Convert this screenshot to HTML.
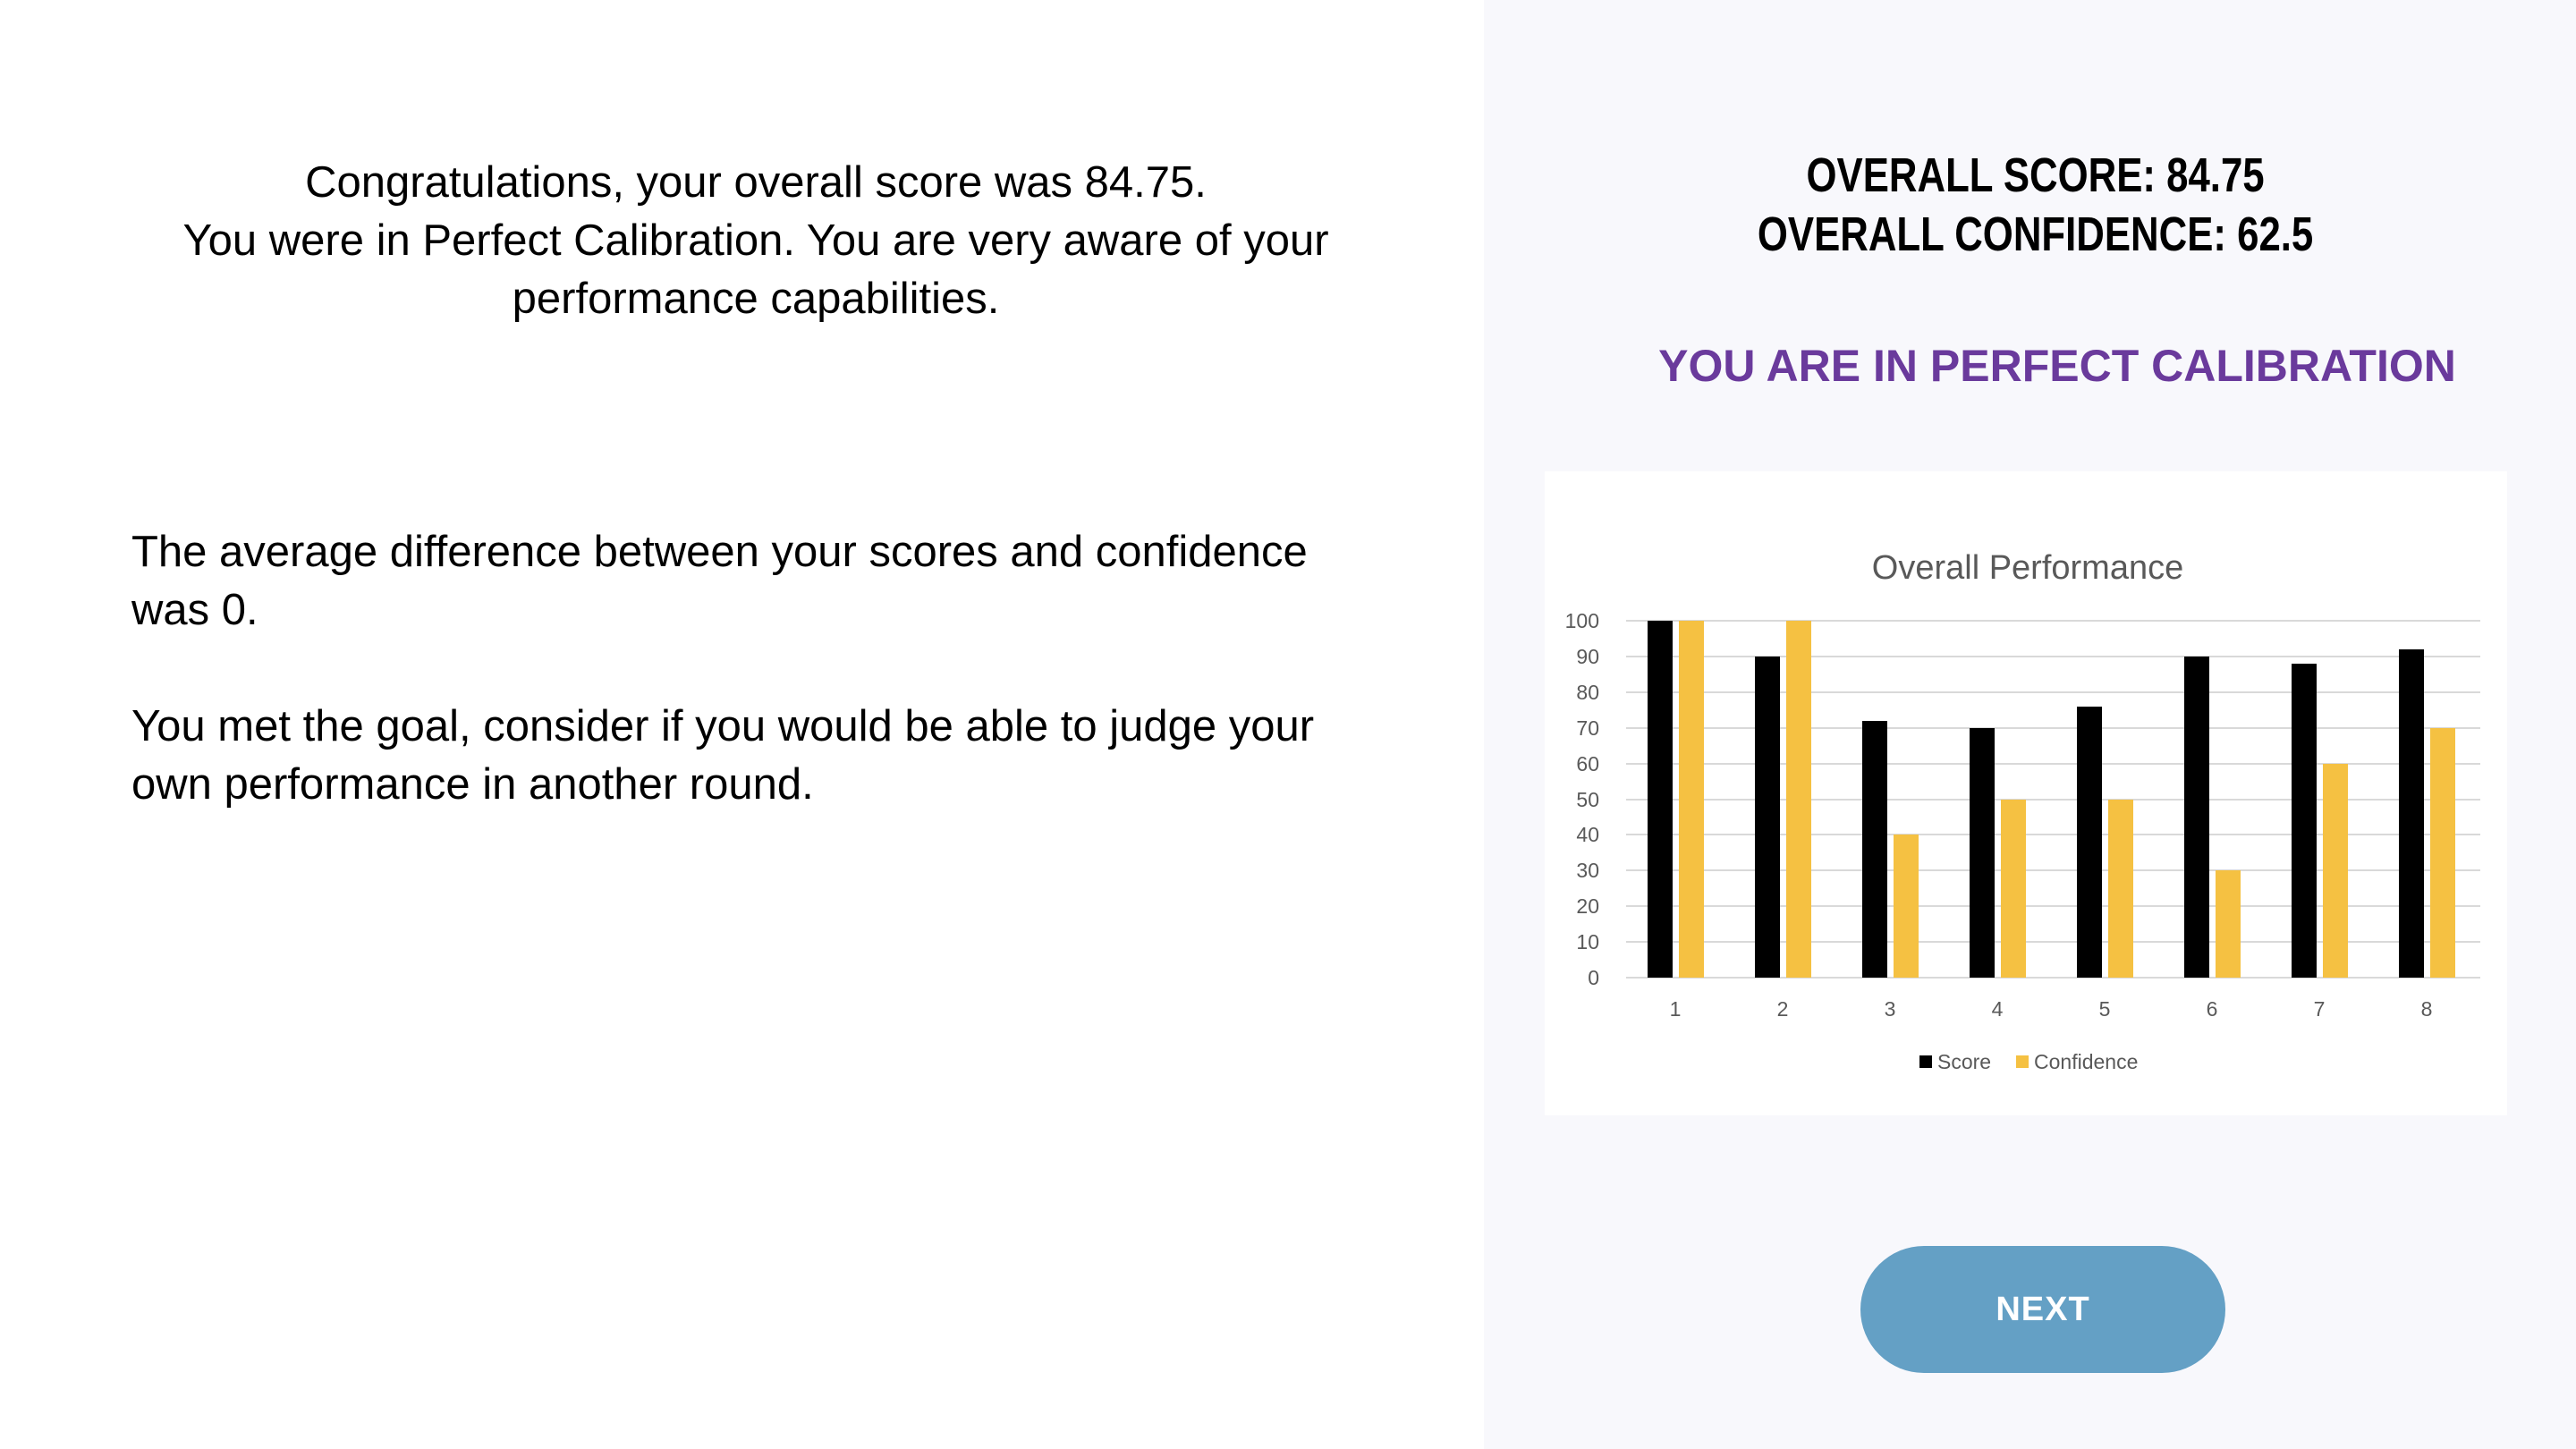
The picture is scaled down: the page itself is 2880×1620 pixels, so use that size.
<!DOCTYPE html>
<html><head><meta charset="utf-8">
<style>
html,body{margin:0;padding:0}
body{width:2880px;height:1620px;position:relative;overflow:hidden;background:#fff;font-family:"Liberation Sans",sans-serif}
.right{position:absolute;left:1659px;top:0;width:1221px;height:1620px;background:#f8f8fc}
.l{position:absolute;color:#000;font-size:49px;line-height:65px}
.c{left:0;width:1690px;text-align:center;top:172px}
.p{left:147px;width:1500px}
.h{position:absolute;left:1659px;width:1234px;text-align:center;top:163px}
.h span{display:inline-block;transform:scaleX(.81);font-weight:bold;color:#000;font-size:54px;line-height:66px;white-space:nowrap}
.cal{position:absolute;left:1659px;width:1282px;text-align:center;top:380px;font-weight:bold;color:#6a3a9c;font-size:50px}
.btn{position:absolute;left:2080px;top:1393px;width:408px;height:142px;border-radius:71px;background:#64a0c5;color:#fff;font-weight:bold;font-size:38px;text-align:center;line-height:142px;letter-spacing:1px}
</style></head><body>
<div class="right"></div>
<div class="l c">Congratulations, your overall score was 84.75.<br>You were in Perfect Calibration. You are very aware of your<br>performance capabilities.</div>
<div class="l p" style="top:585px">The average difference between your scores and confidence<br>was 0.</div>
<div class="l p" style="top:780px">You met the goal, consider if you would be able to judge your<br>own performance in another round.</div>
<div class="h"><span>OVERALL SCORE: 84.75<br>OVERALL CONFIDENCE: 62.5</span></div>
<div class="cal">YOU ARE IN PERFECT CALIBRATION</div>
<svg style="position:absolute;left:0;top:0" width="2880" height="1620">
<rect x="1727" y="527" width="1076" height="720" fill="#fff"/>
<text x="2267" y="647" text-anchor="middle" font-family="Liberation Sans" font-size="38" fill="#595959">Overall Performance</text>
<g stroke="#d9d9d9" stroke-width="2">
<line x1="1818" x2="2773" y1="694" y2="694"/><line x1="1818" x2="2773" y1="734" y2="734"/><line x1="1818" x2="2773" y1="774" y2="774"/><line x1="1818" x2="2773" y1="814" y2="814"/><line x1="1818" x2="2773" y1="854" y2="854"/><line x1="1818" x2="2773" y1="894" y2="894"/><line x1="1818" x2="2773" y1="933" y2="933"/><line x1="1818" x2="2773" y1="973" y2="973"/><line x1="1818" x2="2773" y1="1013" y2="1013"/><line x1="1818" x2="2773" y1="1053" y2="1053"/><line x1="1818" x2="2773" y1="1093" y2="1093"/>
</g>
<g font-family="Liberation Sans" font-size="23" fill="#595959" text-anchor="end">
<text x="1788" y="702">100</text><text x="1788" y="742">90</text><text x="1788" y="782">80</text><text x="1788" y="822">70</text><text x="1788" y="862">60</text><text x="1788" y="902">50</text><text x="1788" y="941">40</text><text x="1788" y="981">30</text><text x="1788" y="1021">20</text><text x="1788" y="1061">10</text><text x="1788" y="1101">0</text>
</g>
<rect x="2146" y="1180" width="14" height="14" fill="#000"/>
<text x="2166" y="1195" font-family="Liberation Sans" font-size="23" fill="#595959">Score</text>
<rect x="2254" y="1180" width="14" height="14" fill="#f5c142"/>
<text x="2274" y="1195" font-family="Liberation Sans" font-size="23" fill="#595959">Confidence</text>
<g>
<rect x="1842" y="694" width="28" height="399" fill="#000"/><rect x="1877" y="694" width="28" height="399" fill="#f5c142"/>
<rect x="1962" y="734" width="28" height="359" fill="#000"/><rect x="1997" y="694" width="28" height="399" fill="#f5c142"/>
<rect x="2082" y="806" width="28" height="287" fill="#000"/><rect x="2117" y="933" width="28" height="160" fill="#f5c142"/>
<rect x="2202" y="814" width="28" height="279" fill="#000"/><rect x="2237" y="894" width="28" height="199" fill="#f5c142"/>
<rect x="2322" y="790" width="28" height="303" fill="#000"/><rect x="2357" y="894" width="28" height="199" fill="#f5c142"/>
<rect x="2442" y="734" width="28" height="359" fill="#000"/><rect x="2477" y="973" width="28" height="120" fill="#f5c142"/>
<rect x="2562" y="742" width="28" height="351" fill="#000"/><rect x="2597" y="854" width="28" height="239" fill="#f5c142"/>
<rect x="2682" y="726" width="28" height="367" fill="#000"/><rect x="2717" y="814" width="28" height="279" fill="#f5c142"/>
</g>
<g font-family="Liberation Sans" font-size="23" fill="#595959" text-anchor="middle">
<text x="1873" y="1136">1</text><text x="1993" y="1136">2</text><text x="2113" y="1136">3</text><text x="2233" y="1136">4</text><text x="2353" y="1136">5</text><text x="2473" y="1136">6</text><text x="2593" y="1136">7</text><text x="2713" y="1136">8</text>
</g>
</svg>
<div class="btn">NEXT</div>
</body></html>
